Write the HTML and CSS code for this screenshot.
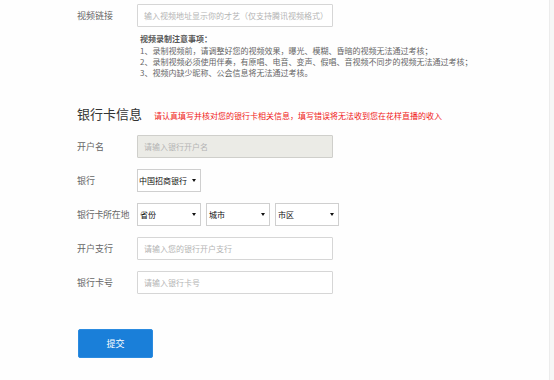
FILE: index.html
```html
<!DOCTYPE html>
<html lang="zh-CN">
<head>
<meta charset="utf-8">
<title>银行卡信息</title>
<link rel="stylesheet" href="styles.css">
</head>
<body>
<div class="page">
  <div class="row">
    <label class="label">视频链接</label>
    <input class="field" type="text" placeholder="输入视频地址显示你的才艺（仅支持腾讯视频格式）">
  </div>
  <div class="notes">
    <p class="notes-title">视频录制注意事项：</p>
    <p>1、录制视频前，请调整好您的视频效果，曝光、模糊、昏暗的视频无法通过考核；</p>
    <p>2、录制视频必须使用伴奏，有原唱、电音、变声、假唱、音视频不同步的视频无法通过考核；</p>
    <p>3、视频内缺少昵称、公会信息将无法通过考核。</p>
  </div>

  <div class="section-head">
    <h2 class="section-title">银行卡信息</h2>
    <span class="warn">请认真填写并核对您的银行卡相关信息，填写错误将无法收到您在花样直播的收入</span>
  </div>

  <div class="rows">
    <div class="row">
      <label class="label">开户名</label>
      <input class="field field-disabled" type="text" placeholder="请输入银行开户名" disabled>
    </div>
    <div class="row">
      <label class="label">银行</label>
      <div class="select select-bank"><span class="select-text">中国招商银行</span><span class="arrow"></span></div>
    </div>
    <div class="row">
      <label class="label label-tight">银行卡所在地</label>
      <div class="select-group">
        <div class="select select-area"><span class="select-text">省份</span><span class="arrow"></span></div>
        <div class="select select-area"><span class="select-text">城市</span><span class="arrow"></span></div>
        <div class="select select-area"><span class="select-text">市区</span><span class="arrow"></span></div>
      </div>
    </div>
    <div class="row">
      <label class="label">开户支行</label>
      <input class="field" type="text" placeholder="请输入您的银行开户支行">
    </div>
    <div class="row">
      <label class="label">银行卡号</label>
      <input class="field" type="text" placeholder="请输入银行卡号">
    </div>
  </div>

  <button class="submit" type="button">提交</button>
</div>
</body>
</html>
```

FILE: styles.css
```css
html {
  background: #f6f6f6;
}
body {
  margin: 0;
  font-family: "Noto Sans CJK SC", "Noto Sans", sans-serif;
  color: #555;
}
.page {
  width: 550px;
  height: 380px;
  box-sizing: border-box;
  background: #fefefe;
  border-right: 1px solid #ececec;
  padding: 4px 0 0 77px;
}
.row {
  display: flex;
  align-items: center;
  height: 23px;
}
.label {
  width: 60px;
  flex: none;
  font-size: 9px;
  color: #666;
  white-space: nowrap;
}
.label-tight {
  width: 58px;
  margin-right: 2px;
  letter-spacing: -0.3px;
}
.field {
  box-sizing: border-box;
  width: 196px;
  height: 23px;
  margin: 0;
  padding: 0 6px;
  border: 1px solid #d6d6d6;
  border-radius: 1px;
  background: #fff;
  font-family: inherit;
  font-size: 8px;
  color: #333;
  outline: none;
}
.field::placeholder {
  color: #b4b4b4;
}
.field-disabled {
  background: #ebebe6;
  border-color: #cfcfcb;
}
.notes {
  margin: 6px 0 0 63px;
  font-size: 8px;
  line-height: 11px;
  color: #666;
}
.notes p {
  margin: 0;
}
.notes .notes-title {
  font-weight: bold;
  color: #555;
  margin-bottom: 1px;
}
.section-head {
  display: flex;
  align-items: baseline;
  margin-top: 27px;
  height: 18px;
}
.section-title {
  margin: 0 12px 0 0;
  font-size: 13px;
  font-weight: normal;
  color: #333;
  line-height: 18px;
}
.warn {
  font-size: 8px;
  color: #f01818;
}
.rows {
  display: flex;
  flex-direction: column;
  gap: 11px;
  margin-top: 12px;
}
.select-group {
  display: flex;
  gap: 5px;
}
.select {
  box-sizing: border-box;
  height: 23px;
  display: flex;
  align-items: center;
  justify-content: space-between;
  padding: 0 4px 0 2px;
  border: 1px solid #cfcfcf;
  background: #fff;
  font-size: 8px;
  color: #111;
}
.select-bank {
  width: 64px;
  padding-left: 1px;
}
.select-area {
  width: 64px;
}
.select-text {
  white-space: nowrap;
}
.arrow {
  width: 0;
  height: 0;
  border-left: 2px solid transparent;
  border-right: 2px solid transparent;
  border-top: 3px solid #111;
}
.submit {
  display: block;
  margin: 35px 0 0 1px;
  width: 75px;
  height: 29px;
  padding: 0;
  border: 1px solid #2b8be0;
  border-radius: 2px;
  background: #1a7fd9;
  color: #fff;
  font-family: inherit;
  font-size: 9px;
}
```
